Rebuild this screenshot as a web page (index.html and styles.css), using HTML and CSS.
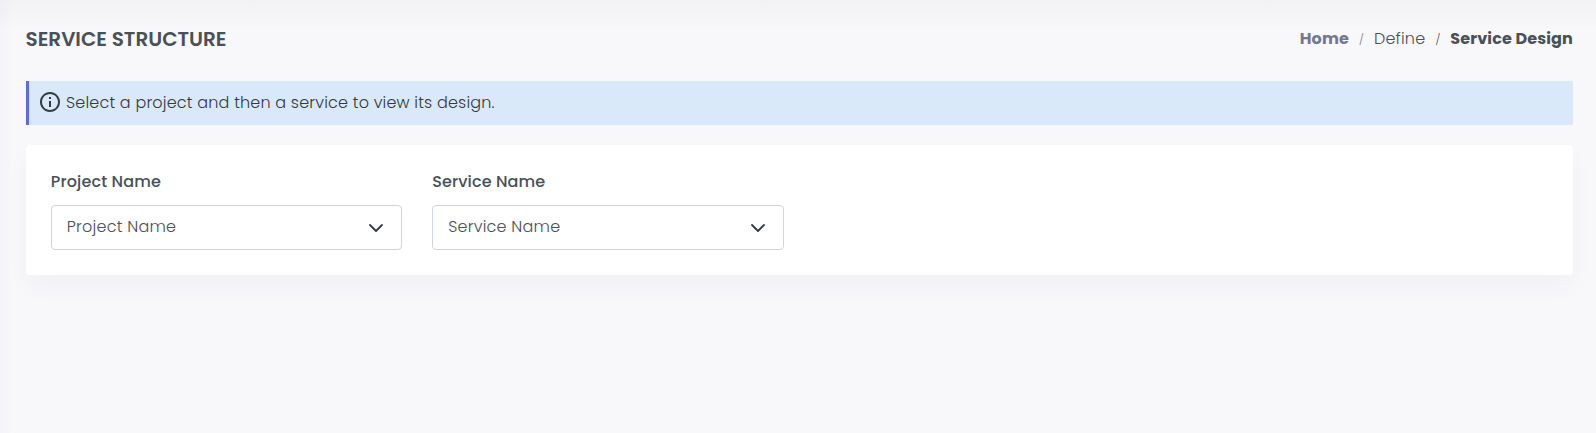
FILE: index.html
```html
<!DOCTYPE html>
<html lang="en">
<head>
<meta charset="utf-8">
<title>Service Structure</title>
<link rel="stylesheet" href="styles.css">
</head>
<body>
<main class="page">
  <header class="page-header">
    <h1 class="page-title">SERVICE STRUCTURE</h1>
    <nav class="breadcrumb">
      <a class="crumb-home">Home</a>
      <span class="slash slash-light">/</span>
      <span class="crumb">Define</span>
      <span class="slash">/</span>
      <span class="crumb-active">Service Design</span>
    </nav>
  </header>
  <div class="notice">
    <svg class="info" viewBox="0 0 24 24"><path fill="currentColor" d="M11 7h2v2h-2zm0 4h2v6h-2zm1-9C6.480 2 2 6.480 2 12s4.480 10 10 10 10-4.480 10-10S17.520 2 12 2zm0 18c-4.410 0-8-3.590-8-8s3.590-8 8-8 8 3.590 8 8-3.590 8-8 8z"/></svg>
    <span class="notice-text">Select a project and then a service to view its design.</span>
  </div>
  <section class="card">
    <div class="field">
      <div class="label">Project Name</div>
      <div class="select"><span class="value">Project Name</span><svg class="chevron" viewBox="0 0 16 16"><path d="m2 5 6 6 6-6"/></svg></div>
    </div>
    <div class="field">
      <div class="label">Service Name</div>
      <div class="select"><span class="value">Service Name</span><svg class="chevron" viewBox="0 0 16 16"><path d="m2 5 6 6 6-6"/></svg></div>
    </div>
  </section>
</main>
</body>
</html>
```
FILE: styles.css
```css
* { box-sizing: border-box; }
body {
  margin: 0;
  background: #f8f8fb;
  color: #495057;
  font: 400 16px/24px Poppins, Inter, sans-serif;
}
.page {
  height: 433px;
  overflow: hidden;
  padding: 24px 23px 0 26px;
  background:
    linear-gradient(rgba(38, 38, 38, .026), rgba(38, 38, 38, 0)) 0 0 / 100% 30px no-repeat,
    linear-gradient(90deg, rgba(18, 38, 63, .015), rgba(18, 38, 63, 0)) 0 0 / 14px 100% no-repeat;
}
.page-header {
  display: flex;
  justify-content: space-between;
  align-items: center;
  height: 30px;
  margin-bottom: 27px;
}
.page-title { margin: 0 0 1px -.5px; font-size: 20px; font-weight: 600; white-space: nowrap; }
.breadcrumb { display: flex; align-items: center; white-space: nowrap; }
.crumb-home { color: #74788d; font-weight: 700; letter-spacing: .1px; }
.crumb { font-weight: 300; letter-spacing: .2px; }
.crumb-active { font-weight: 700; letter-spacing: .12px; }
.slash { width: 25px; text-align: center; font-size: 11px; font-weight: 300; line-height: 26px; }
.slash-light { color: #74788d; }
.notice {
  display: flex;
  align-items: center;
  height: 44px;
  margin-bottom: 20px;
  padding-left: 9px;
  border-left: 3px solid #556ee6;
  background: #d9e9f9;
  color: #343a40;
}
.info { width: 24px; height: 24px; margin: -2px 4px 0 0; }
.notice-text { font-weight: 300; letter-spacing: .18px; white-space: nowrap; }
.card {
  display: flex;
  gap: 30px;
  height: 130px;
  padding: 25px;
  border-radius: 4px;
  background: #fff;
  box-shadow: 0 12px 24px rgba(18, 38, 63, .03);
}
.field { width: 351.330px; }
.label { height: 24px; margin: 0 0 11px -.2px; font-weight: 500; letter-spacing: .13px; }
.select {
  display: flex;
  align-items: center;
  justify-content: space-between;
  height: 45px;
  padding: 0 17px 0 14.8px;
  border: 1px solid #ced4da;
  border-radius: 4px;
}
.value { margin-top: -1px; font-weight: 300; letter-spacing: .22px; }
.chevron { width: 16px; height: 16px; fill: none; stroke: #343a40; stroke-width: 1.8; stroke-linecap: round; stroke-linejoin: round; }
```
